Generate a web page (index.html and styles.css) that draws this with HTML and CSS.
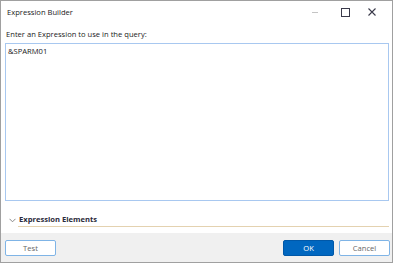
FILE: index.html
```html
<!DOCTYPE html>
<html lang="en">
<head>
    <meta charset="UTF-8">
    <meta name="viewport" content="width=device-width, initial-scale=1.0">
    <title>Expression Builder</title>
    <link rel="stylesheet" href="styles.css">
</head>
<body>
    <div class="window">
        <div class="titlebar">
            <span class="title">Expression Builder</span>
            <div class="controls">
                <span class="ctl min"></span>
                <span class="ctl max"></span>
                <span class="ctl close">
                    <svg width="8" height="8" viewBox="0 0 8 8"><path d="M0.5 0.5L7.5 7.5M7.5 0.5L0.5 7.5" stroke="#3a3a4a" stroke-width="1.1"/></svg>
                </span>
            </div>
        </div>
        <div class="content">
            <div class="prompt">Enter an Expression to use in the query:</div>
            <div class="editor">&amp;SPARM01</div>
            <div class="elements">
                <span class="chev">
                    <svg width="7" height="5" viewBox="0 0 7 5"><path d="M0.5 0.8L3.5 3.8L6.5 0.8" stroke="#888" stroke-width="1" fill="none"/></svg>
                </span>
                <span class="elements-title">Expression Elements</span>
            </div>
        </div>
        <div class="footer">
            <button class="btn" type="button">Test</button>
            <div class="spacer"></div>
            <button class="btn primary" type="button">OK</button>
            <button class="btn" type="button">Cancel</button>
        </div>
    </div>
</body>
</html>
```

FILE: styles.css
```css
body {
    margin: 0;
    background: #ffffff;
    font-family: "Open Sans", "Liberation Sans", sans-serif;
    font-size: 7.6px;
    color: #222;
}
.window {
    width: 391px;
    height: 261px;
    border: 1px solid #a0a0a0;
    display: flex;
    flex-direction: column;
    background: #ffffff;
}
.titlebar {
    height: 22px;
    display: flex;
    align-items: center;
    padding-left: 6px;
}
.title {
    flex: 1;
    color: #222;
}
.controls {
    display: flex;
    align-items: center;
    height: 22px;
    padding-right: 8px;
}
.ctl {
    width: 30px;
    display: flex;
    justify-content: center;
    align-items: center;
}
.min::before {
    content: "";
    width: 6px;
    border-top: 1px solid #c4c4c4;
    margin-top: 1px;
}
.max::before {
    content: "";
    width: 7px;
    height: 7px;
    border: 1px solid #3a3a4a;
}
.close {
    width: 24px;
}
.content {
    padding: 4px 3px 0 4px;
    display: flex;
    flex-direction: column;
}
.prompt {
    height: 15px;
    line-height: 15px;
    padding-left: 1px;
}
.editor {
    margin-top: 1px;
    height: 158px;
    box-sizing: border-box;
    border: 1px solid #a8c8f0;
    padding: 2px 2px;
}
.elements {
    margin-top: 10px;
    margin-left: 13px;
    display: flex;
    align-items: center;
    gap: 3px;
    height: 15px;
    border-bottom: 1px solid #e4d2b0;
}
.chev {
    margin-left: -9px;
    display: flex;
    margin-top: 3px;
}
.elements-title {
    font-weight: bold;
    color: #2a2a3a;
}
.footer {
    margin-top: 6px;
    flex: 1;
    background: #f0f0f0;
    display: flex;
    align-items: flex-start;
    padding: 7px 2px 0 4px;
    gap: 5px;
}
.spacer {
    flex: 1;
}
.btn {
    width: 51px;
    height: 16px;
    border: 1px solid #7fb4e6;
    border-radius: 2px;
    background: #ffffff;
    font-family: inherit;
    font-size: 7.6px;
    color: #666;
    padding: 0;
}
.primary {
    background: #0067c0;
    border-color: #0058a8;
    color: #ffffff;
}
```
